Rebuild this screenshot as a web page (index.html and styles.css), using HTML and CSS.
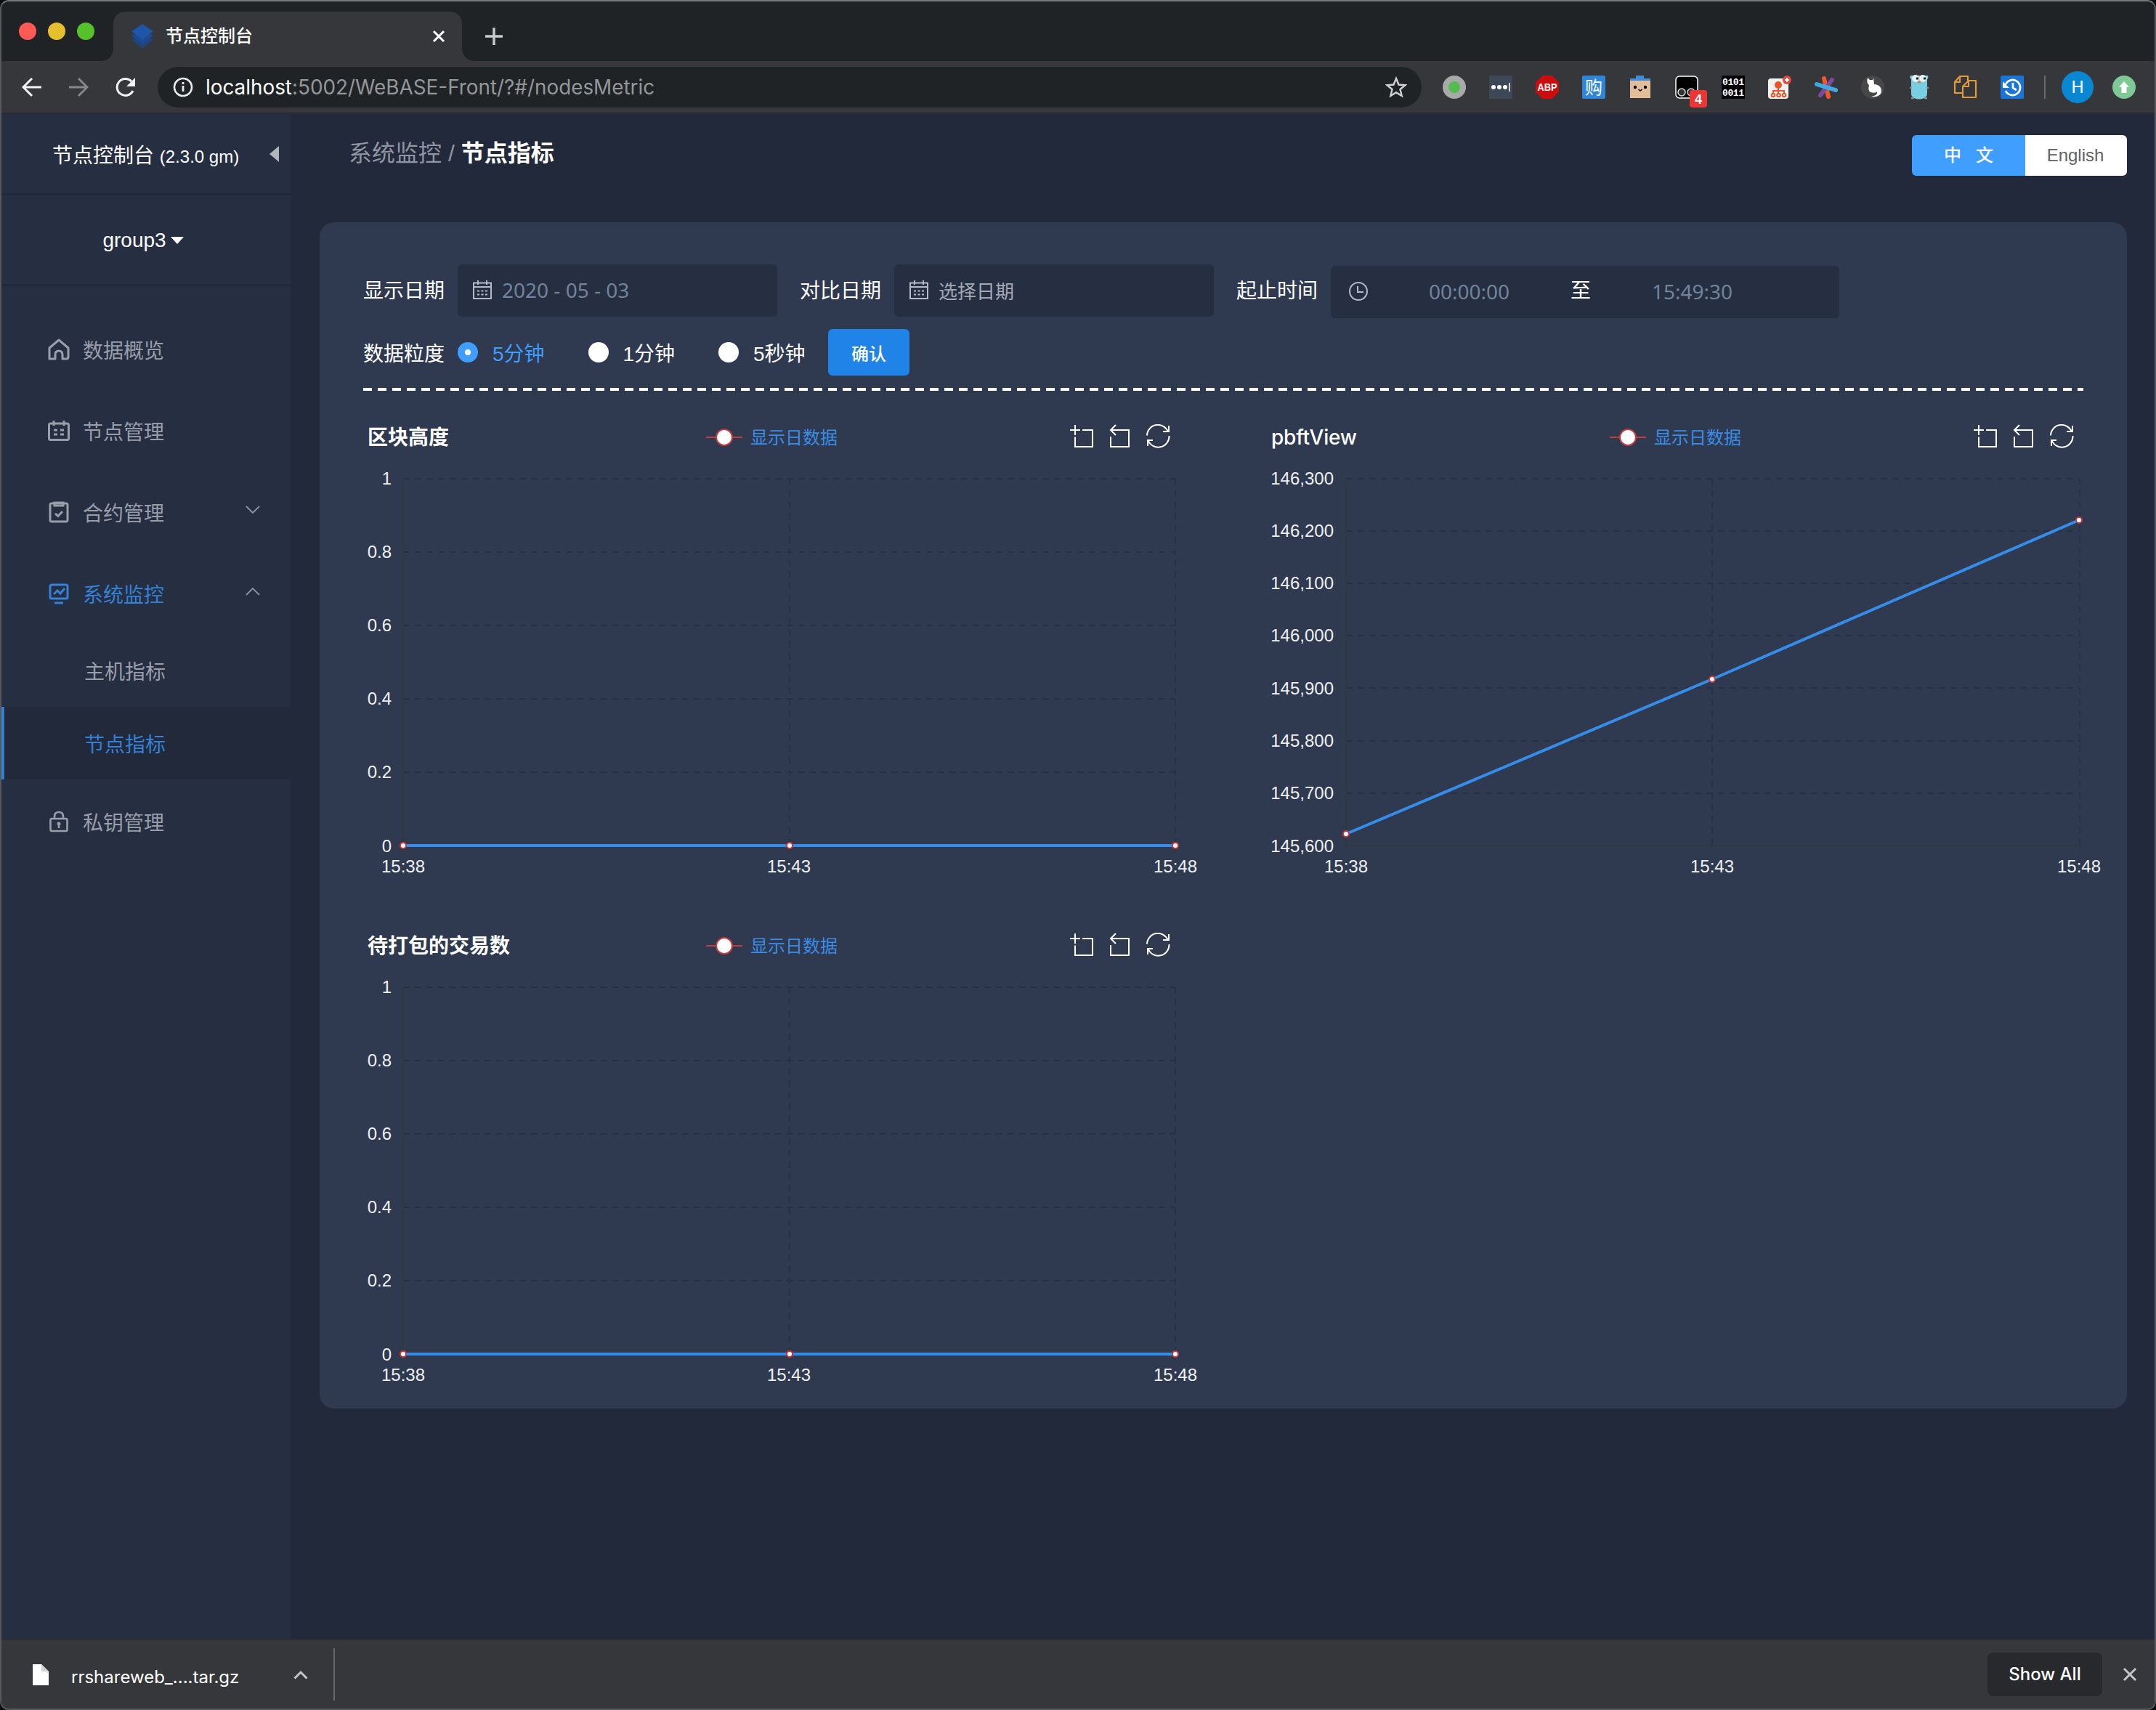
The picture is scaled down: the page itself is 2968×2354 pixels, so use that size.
FILE: index.html
```html
<!DOCTYPE html>
<html lang="zh-CN">
<head>
<meta charset="utf-8">
<title>节点控制台</title>
<link rel="stylesheet" href="styles.css">
</head>
<body>
<svg class="defs" width="0" height="0">
  <defs>
    <symbol id="calendar" viewBox="0 0 26 28"><g fill="none" stroke="#b4bac6" stroke-width="2"><path d="M1 4.500h24v21.500H1zM1 10h24M7 1v6M19 1v6"/><path d="M6 15.500h14M6 20.500h14" stroke-dasharray="3 2.500"/></g></symbol>
    <symbol id="toolbox" viewBox="0 0 140 34"><g fill="none" stroke="#fff" stroke-width="2"><path d="M0 8h14M7 1v14M17 8h14v23H7V17.500"/><path d="M63 1l-7 7 7 7M56 8h25v23H56V17"/><path d="M106 15.500a15 15 0 0 1 29-5M136 2v8h-8M136.500 16a15 15 0 0 1-29 6M107 30v-8h7"/></g></symbol>
    <symbol id="legend" viewBox="0 0 52 28"><path d="M1 14h50" stroke="#c23b3f" stroke-width="2"/><circle cx="26" cy="14" r="11" fill="#fff" stroke="#c23b3f" stroke-width="2"/></symbol>
    <symbol id="dot" viewBox="0 0 10 10"><circle cx="5" cy="5" r="4" fill="#fff" stroke="#c8373c" stroke-width="2"/></symbol>
  </defs>
</svg>
<div class="window">
  <header class="tabstrip">
    <div class="lights"><i class="red"></i><i class="yellow"></i><i class="green"></i></div>
    <div class="tab">
      <svg class="favicon" width="32" height="34" viewBox="0 0 32 34"><path d="M16 13l15 9-15 12L1 22z" fill="#204378"/><path d="M16 7l15 9-15 12L1 16z" fill="#1d4a90"/><path d="M16 0l15 10-15 12L1 10z" fill="#1d55a8"/></svg>
      <span class="tab-title">节点控制台</span>
      <svg width="18" height="18" viewBox="0 0 18 18"><path d="M2 2l14 14M16 2L2 16" stroke="#fff" stroke-width="3"/></svg>
    </div>
    <svg class="newtab" width="26" height="26" viewBox="0 0 26 26"><path d="M13 1v24M1 13h24" stroke="#c8cacc" stroke-width="3.500"/></svg>
  </header>
  <div class="toolbar">
    <svg class="nav" width="28" height="28" viewBox="0 0 28 28"><path d="M27 14H3M14 2L2 14l12 12" fill="none" stroke="#f1f3f4" stroke-width="3"/></svg>
    <svg class="nav" width="28" height="28" viewBox="0 0 28 28"><path d="M1 14h24M14 2l12 12-12 12" fill="none" stroke="#85878a" stroke-width="3"/></svg>
    <svg class="nav" width="30" height="28" viewBox="0 0 30 28"><path d="M25 19A11.500 11.500 0 1 1 23 6" fill="none" stroke="#f1f3f4" stroke-width="3"/><path d="M28 1v12H16z" fill="#f1f3f4"/></svg>
    <div class="omnibox">
      <svg width="28" height="28" viewBox="0 0 28 28"><circle cx="14" cy="14" r="12" fill="none" stroke="#e8eaed" stroke-width="2.600"/><path d="M14 12v8M14 7v3" stroke="#e8eaed" stroke-width="2.800"/></svg>
      <span class="url"><b>localhost</b>:5002/WeBASE-Front/?#/nodesMetric</span>
      <svg width="30" height="30" viewBox="0 0 30 30"><path d="M15 3l3.500 8.500 9 .7-7 5.800 2.200 9L15 22.200 7.300 27l2.200-9-7-5.800 9-.7z" fill="none" stroke="#d0d2d5" stroke-width="2.400"/></svg>
    </div>
    <div class="extensions">
      <svg viewBox="0 0 32 32"><circle cx="16" cy="16" r="16" fill="#a9a9a9"/><circle cx="16" cy="16" r="8" fill="#53bd52"/></svg>
      <svg viewBox="0 0 32 32"><path d="M0 0h32v32H0z" fill="#3c4855"/><g fill="#fff"><circle cx="6" cy="16" r="3"/><circle cx="14" cy="16" r="3"/><circle cx="22" cy="16" r="3"/><path d="M27 10h1.500v12H27z"/></g></svg>
      <svg viewBox="0 0 32 32"><path d="M9.500 0h13L32 9.500v13L22.500 32h-13L0 22.500v-13z" fill="#cb0d0d"/><text x="16" y="21" class="abp" textLength="27" lengthAdjust="spacingAndGlyphs">ABP</text></svg>
      <svg viewBox="0 0 32 32"><rect width="32" height="32" rx="2" fill="#2f86d8"/><text x="16" y="25" class="buy">购</text></svg>
      <svg viewBox="0 0 32 32"><path d="M10 0h11v6H10z" fill="#3d8edb"/><path d="M2 4h28v27H2z" fill="#e3bd9a"/><path d="M2 4h28v3H2z" fill="#3d8edb"/><circle cx="9" cy="16" r="2.200"/><circle cx="23" cy="16" r="2.200"/><path d="M13.500 19l2.500 2 2.500-2" fill="none" stroke="#000" stroke-width="1.600"/></svg>
      <svg viewBox="0 0 32 32"><rect x="1" y="1" width="30" height="30" rx="5" fill="#000" stroke="#fff" stroke-width="1.500"/><g fill="#333" stroke="#ddd" stroke-width="1.500"><circle cx="9" cy="23" r="5"/><circle cx="22" cy="23" r="5"/></g><rect x="20" y="20" width="24" height="24" rx="4" fill="#ea3634"/><text x="32" y="38.500" class="badge">4</text></svg>
      <svg viewBox="0 0 32 32"><path d="M0 0h32v32H0z"/><text x="1" y="13" class="bits" textLength="30">0101</text><text x="1" y="28" class="bits" textLength="30">0011</text></svg>
      <svg viewBox="0 0 32 32"><rect y="4" width="28" height="28" rx="4" fill="#f4f2f1"/><g fill="none" stroke="#e7552d" stroke-width="2"><path d="M14 16v8M7 25v-4h15v4"/><circle cx="7" cy="27" r="2.300"/><circle cx="14.500" cy="27" r="2.300"/><circle cx="22" cy="27" r="2.300"/></g><circle cx="14" cy="13" r="5" fill="#e7552d"/><circle cx="26" cy="6" r="6" fill="#e64a3b"/><path d="M26 3v6M23 6h6" stroke="#fff" stroke-width="2"/></svg>
      <svg viewBox="0 0 32 32"><g stroke-width="6" stroke-linecap="round"><path d="M13 4l6 25" stroke="#f0592b"/><path d="M24 6L8 27" stroke="#7d4b9b"/><path d="M3 12l26 8" stroke="#3fa9e0"/></g></svg>
      <svg viewBox="0 0 32 32"><circle cx="16" cy="16" r="16" fill="#474747"/><path d="M9 3l3 3h4l1-3 1 9c6 0 10 4 10 9 0 6-6 9-14 8 5-1 9-3 8-7-1 2-5 2-9 1-3-2-3-5-2-10-3-2-3-6-2-10z" fill="#fff"/></svg>
      <svg viewBox="0 0 32 32"><path d="M4 0h24c1 3 0 4-1 5v20c0 10-22 10-22 0V5C3 4 3 2 4 0z" fill="#78cfe1"/><circle cx="11" cy="4" r="5" fill="#eee"/><circle cx="21" cy="4" r="5" fill="#eee"/><path d="M12 4h3M22 4h3" stroke="#222" stroke-width="3"/><path d="M14 9h4" stroke="#b98b6c" stroke-width="3"/><path d="M3 17h3M26 17h3M5 31h4M23 31h4" stroke="#8d9295" stroke-width="2.500"/></svg>
      <svg viewBox="0 0 32 32"><g fill="none" stroke="#e09a3c" stroke-width="2.200" stroke-linejoin="round"><path d="M11 24H1V9l7-8h11v7M8 1v8H1"/><path d="M12 15l8-8h10v23H12zM20 7v8h-8"/></g></svg>
      <svg viewBox="0 0 32 32"><rect width="32" height="32" rx="2" fill="#1976d8"/><path d="M7 12a10.500 10.500 0 1 1 0 9M17 10v7l5 3" fill="none" stroke="#fff" stroke-width="2.800"/><path d="M3 8v9h9z" fill="#fff"/></svg>
    </div>
    <i class="bar-rule"></i>
    <span class="avatar">H</span>
    <svg width="32" height="32" viewBox="0 0 32 32"><circle cx="16" cy="16" r="16" fill="#7ec995"/><path d="M16 8l7 8h-3.500v8h-7v-8H9z" fill="#fff"/></svg>
  </div>

  <div class="app">
    <aside class="sidebar">
      <div class="brand"><span>节点控制台 <small>(2.3.0 gm)</small></span><i class="collapse"></i></div>
      <div class="group"><span>group3</span><i class="caret"></i></div>
      <nav class="menu">
        <a class="item"><svg width="30" height="30" viewBox="0 0 30 30"><path d="M2 27V13L15 2l13 11v12q0 3-3 3h-5v-6q0-5-5-5t-5 5v6H2z" fill="none" stroke="currentColor" stroke-width="3" stroke-linejoin="round"/></svg><span>数据概览</span></a>
        <a class="item"><svg width="30" height="30" viewBox="0 0 30 30"><g fill="none" stroke="currentColor" stroke-width="3"><rect x="1.500" y="5" width="27" height="22.500" rx="2"/><path d="M8 1v7M22 1v7M8 14h5M17 14h5M8 20h5M17 20h5"/></g></svg><span>节点管理</span></a>
        <a class="item"><svg width="30" height="30" viewBox="0 0 30 30"><g fill="none" stroke="currentColor" stroke-width="3"><rect x="3" y="3" width="24" height="25" rx="2"/><path d="M9 2v4h12V2zM10 17l4 3.500 6-6.500"/></g></svg><span>合约管理</span><svg class="chev" width="20" height="12" viewBox="0 0 20 12"><path d="M1 1l9 9 9-9" fill="none" stroke="#8d93a0" stroke-width="1.800"/></svg></a>
        <a class="item on"><svg width="30" height="30" viewBox="0 0 30 30"><g fill="none" stroke="currentColor" stroke-width="3"><rect x="3" y="3" width="24" height="19" rx="2"/><path d="M9 28h12M8 16l5-5 4 4 6-7"/></g></svg><span>系统监控</span><svg class="chev" width="20" height="12" viewBox="0 0 20 12"><path d="M1 11l9-9 9 9" fill="none" stroke="#8d93a0" stroke-width="1.800"/></svg></a>
        <a class="sub">主机指标</a>
        <a class="sub active">节点指标</a>
        <a class="item"><svg width="30" height="30" viewBox="0 0 30 30"><g fill="none" stroke="currentColor" stroke-width="2.600"><rect x="3.500" y="11" width="23" height="17" rx="2"/><path d="M9 11V8q0-6 6-6t6 6v3M15 17v7"/></g><circle cx="15" cy="18" r="2.500" fill="currentColor"/></svg><span>私钥管理</span></a>
      </nav>
    </aside>

    <main class="main">
      <div class="topbar">
        <h1 class="crumbs">系统监控 <i>/</i> <b>节点指标</b></h1>
        <div class="lang"><span class="zh">中<i></i>文</span><span class="en">English</span></div>
      </div>
      <section class="panel">
        <div class="filters">
          <label>显示日期</label>
          <div class="field date"><svg width="26" height="28"><use href="#calendar"/></svg><span class="value">2020 - 05 - 03</span></div>
          <label>对比日期</label>
          <div class="field date"><svg width="26" height="28"><use href="#calendar"/></svg><span class="hint">选择日期</span></div>
          <label>起止时间</label>
          <div class="field time"><svg width="28" height="28" viewBox="0 0 28 28"><g fill="none" stroke="#b4bac6" stroke-width="2"><circle cx="14" cy="14" r="12"/><path d="M13 7v8h8"/></g></svg><span class="value start">00:00:00</span><span class="to">至</span><span class="value end">15:49:30</span></div>
        </div>
        <div class="granularity">
          <label>数据粒度</label>
          <span class="radio checked"><i></i>5分钟</span>
          <span class="radio"><i></i>1分钟</span>
          <span class="radio"><i></i>5秒钟</span>
          <button class="confirm">确认</button>
        </div>
        <div class="divider"></div>
        <div class="charts">
          <svg class="chart" viewBox="0 0 1150 650">
            <text class="title" x="6" y="42">区块高度</text>
            <use href="#legend" x="471" y="18" width="52" height="28"/><text class="legend" x="533" y="41">显示日数据</text>
            <use href="#toolbox" x="973" y="14" width="140" height="34"/>
            <path class="grid" d="M55 89H1118M55 190H1118M55 291H1118M55 392H1118M55 493H1118M587 89V594M1118 89V594"/>
            <path class="axis" d="M55 89V604M587 594v10M1118 594v10M55 594H1118"/>
            <g class="ylab"><text x="39" y="97">1</text><text x="39" y="198">0.8</text><text x="39" y="299">0.6</text><text x="39" y="400">0.4</text><text x="39" y="501">0.2</text><text x="39" y="603">0</text></g>
            <g class="xlab"><text x="55" y="631">15:38</text><text x="586" y="631">15:43</text><text x="1118" y="631">15:48</text></g>
            <path class="line" d="M55 594H1118"/>
            <use href="#dot" x="50" y="589" width="10" height="10"/><use href="#dot" x="582" y="589" width="10" height="10"/><use href="#dot" x="1113" y="589" width="10" height="10"/>
          </svg>
          <svg class="chart" viewBox="0 0 1150 650">
            <text class="title latin" x="6" y="42" textLength="118">pbftView</text>
            <use href="#legend" x="471" y="18" width="52" height="28"/><text class="legend" x="533" y="41">显示日数据</text>
            <use href="#toolbox" x="973" y="14" width="140" height="34"/>
            <path class="grid" d="M109 89H1119M109 161H1119M109 233H1119M109 305H1119M109 377H1119M109 450H1119M109 522H1119M613 89V594M1119 89V594"/>
            <path class="axis" d="M109 89V604M613 594v10M1119 594v10M109 594H1119"/>
            <g class="ylab"><text x="92" y="97">146,300</text><text x="92" y="169">146,200</text><text x="92" y="241">146,100</text><text x="92" y="313">146,000</text><text x="92" y="386">145,900</text><text x="92" y="458">145,800</text><text x="92" y="530">145,700</text><text x="92" y="603">145,600</text></g>
            <g class="xlab"><text x="109" y="631">15:38</text><text x="613" y="631">15:43</text><text x="1118" y="631">15:48</text></g>
            <path class="line" d="M109 578L613 365L1118 146"/>
            <use href="#dot" x="104" y="573" width="10" height="10"/><use href="#dot" x="608" y="360" width="10" height="10"/><use href="#dot" x="1113" y="141" width="10" height="10"/>
          </svg>
          <svg class="chart" viewBox="0 0 1150 650">
            <text class="title" x="6" y="42">待打包的交易数</text>
            <use href="#legend" x="471" y="18" width="52" height="28"/><text class="legend" x="533" y="41">显示日数据</text>
            <use href="#toolbox" x="973" y="14" width="140" height="34"/>
            <path class="grid" d="M55 89H1118M55 190H1118M55 291H1118M55 392H1118M55 493H1118M587 89V594M1118 89V594"/>
            <path class="axis" d="M55 89V604M587 594v10M1118 594v10M55 594H1118"/>
            <g class="ylab"><text x="39" y="97">1</text><text x="39" y="198">0.8</text><text x="39" y="299">0.6</text><text x="39" y="400">0.4</text><text x="39" y="501">0.2</text><text x="39" y="603">0</text></g>
            <g class="xlab"><text x="55" y="631">15:38</text><text x="586" y="631">15:43</text><text x="1118" y="631">15:48</text></g>
            <path class="line" d="M55 594H1118"/>
            <use href="#dot" x="50" y="589" width="10" height="10"/><use href="#dot" x="582" y="589" width="10" height="10"/><use href="#dot" x="1113" y="589" width="10" height="10"/>
          </svg>
        </div>
      </section>
    </main>
  </div>

  <footer class="downloads">
    <svg width="22" height="29" viewBox="0 0 22 29"><path d="M0 0h12l10 10v19H0z" fill="#fff"/><path d="M12 0v10h10z" fill="#cfd1d3"/></svg>
    <span class="file">rrshareweb_....tar.gz</span>
    <svg class="up" width="20" height="13" viewBox="0 0 20 13"><path d="M1.500 11.500L10 3l8.500 8.500" fill="none" stroke="#c3c5c8" stroke-width="3"/></svg>
    <i class="foot-rule"></i>
    <span class="showall">Show All</span>
    <svg width="20" height="20" viewBox="0 0 20 20"><path d="M2 2l16 16M18 2L2 18" stroke="#c3c5c8" stroke-width="3"/></svg>
  </footer>
</div>
</body>
</html>
```
FILE: styles.css
```css
* { box-sizing: border-box; }
body { margin: 0; background: #0b0c0e; font-family: "Liberation Sans", "Noto Sans CJK SC", sans-serif; color: #fff; }
i { font-style: normal; }
svg { display: block; flex: none; }
.defs { position: absolute; }
.window { width: 2968px; height: 2354px; border: 2px solid #56595d; border-top-color: #77797c; border-radius: 12px; overflow: hidden; display: flex; flex-direction: column; background: #21293b; }

.tabstrip { height: 82px; flex: none; background: #202326; display: flex; align-items: flex-start; padding-left: 24px; }
.lights { display: flex; gap: 16px; margin-top: 29px; width: 130px; }
.lights i { width: 24px; height: 24px; border-radius: 50%; }
.red { background: #ff5b54; }
.yellow { background: #e6bf2e; }
.green { background: #55c22c; }
.tab { position: relative; width: 480px; height: 68px; margin-top: 14px; padding: 0 23px 0 24px; display: flex; align-items: center; background: #35373a; border-radius: 16px 16px 0 0; }
.tab::before, .tab::after { content: ""; position: absolute; bottom: 0; width: 16px; height: 16px; }
.tab::before { left: -16px; background: radial-gradient(circle at 0 0, #202326 15.500px, #35373a 16px); }
.tab::after { right: -16px; background: radial-gradient(circle at 100% 0, #202326 15.500px, #35373a 16px); }
.tab-title { flex: 1; margin-left: 16px; font-size: 24px; line-height: 34px; font-weight: 500; }
.newtab { margin: 35px 0 0 31px; }

.toolbar { height: 73px; flex: none; background: #35373a; border-bottom: 2px solid #2b2c2f; display: flex; align-items: center; padding-left: 28px; }
.nav { margin-right: 36px; }
.omnibox { width: 1740px; height: 56px; margin-left: -7px; border-radius: 28px; background: #202326; display: flex; align-items: center; padding: 0 20px 0 21px; }
.url { flex: 1; margin-left: 17px; padding-top: 1px; font-family: Inter, sans-serif; font-size: 27.850px; color: #94979a; }
.url b { font-weight: 400; color: #fff; }
.extensions { display: flex; gap: 32px; margin-left: 29px; }
.extensions svg { width: 32px; height: 32px; overflow: visible; }
.abp { font: bold 14px "Liberation Sans", sans-serif; fill: #fff; text-anchor: middle; }
.buy { font: 24px "Noto Sans CJK SC", sans-serif; fill: #fff; text-anchor: middle; }
.badge { font: bold 18px "Liberation Sans", sans-serif; fill: #fff; text-anchor: middle; }
.bits { font: bold 13px "Liberation Mono", monospace; fill: #fff; }
.bar-rule { width: 2px; height: 32px; background: #66686b; margin: 0 22px 0 28px; }
.avatar { width: 44px; height: 44px; border-radius: 50%; background: #0a87d2; font: 24px/44px Roboto, sans-serif; text-align: center; margin-right: 26px; }

.app { flex: 1; min-height: 0; display: flex; }
.sidebar { width: 398px; flex: none; background: #262e41; }
.brand { height: 112px; border-bottom: 3px solid #20283a; display: flex; align-items: center; padding: 0 16px 0 70px; font-size: 28px; }
.brand span { flex: 1; white-space: nowrap; }
.brand small { font-size: 24px; }
.collapse { border: solid transparent; border-width: 11px 13px 11px 0; border-right-color: #b2b5bd; }
.group { height: 125px; border-bottom: 3px solid #20283a; display: flex; align-items: center; justify-content: center; gap: 6px; font-size: 28px; padding: 1px 8px 0 0; }
.caret { border: solid transparent; border-width: 10px 9px 0; border-top-color: #fff; }
.menu { padding-top: 31px; color: #999eab; font-size: 28px; }
.item { height: 112px; display: flex; align-items: center; padding: 0 42px 0 64px; }
.item span { flex: 1; margin-left: 18px; }
.item > svg:first-child { margin-top: -1px; }
.chev { margin-top: -7px; }
.on, .active { color: #3481d6; }
.sub { display: flex; align-items: center; height: 100px; padding-left: 114px; }
.active { background: #21293b; box-shadow: inset 4px 0 #3180d4; margin-bottom: 2px; }

.main { flex: 1; padding: 0 38px 0 40px; background: #21293b; }
.topbar { height: 149px; display: flex; justify-content: space-between; align-items: flex-start; }
.crumbs { margin: 30px 0 0 40px; font-size: 32px; line-height: 48px; font-weight: 400; color: #8f95a1; }
.crumbs b { color: #fff; }
.lang { display: flex; margin-top: 29px; height: 56px; border-radius: 6px; overflow: hidden; font-size: 24px; line-height: 56px; }
.zh { width: 156px; background: #409eff; display: flex; justify-content: center; font-weight: 500; }
.zh i { width: 20px; }
.en { width: 140px; padding-right: 2px; background: #fff; color: #606266; text-align: center; }

.panel { height: 1633px; border-radius: 20px; background: #2f3a51; padding: 58px 60px 0; }
.filters { display: flex; height: 74px; font-size: 28px; }
.filters label { width: 130px; line-height: 73px; }
.field { height: 72px; border-radius: 6px; background: #262e41; display: flex; align-items: center; }
.date { width: 440px; padding: 0 0 2px 21px; margin-right: 31px; }
.date svg { margin-right: 14px; }
.value { font-family: "Noto Sans", sans-serif; color: #71849b; }
.hint { color: #a2a9b5; font-size: 26px; }
.time { width: 700px; margin: 2px 0 0 0; padding: 0 0 2px 24px; }
.start { margin-left: 83px; width: 111px; }
.to { width: 28px; margin: -6px 84px 0; }
.granularity { display: flex; align-items: center; height: 64px; margin-top: 15px; font-size: 28px; }
.granularity label { width: 130px; }
.radio { display: flex; align-items: center; width: 179.500px; }
.radio i { width: 28px; height: 28px; border-radius: 50%; background: #fff; margin-right: 20px; }
.checked { color: #409eff; }
.checked i { border: 10px solid #409eff; }
.confirm { width: 112px; height: 64px; border: 0; border-radius: 6px; background: #1f83e7; color: #fff; font: 500 24px "Liberation Sans", "Noto Sans CJK SC", sans-serif; padding: 0; margin-left: -28.500px; }
.divider { height: 4px; margin-top: 17px; background: repeating-linear-gradient(90deg, #fff 0 12px, transparent 12px 20px); }
.charts { display: grid; grid-template-columns: 1150px 1150px; column-gap: 94px; row-gap: 50px; margin: 32px -60px 0 0; }
.chart { width: 1150px; height: 650px; overflow: visible; }
.title { font-size: 28px; font-weight: 700; fill: #fff; }
.latin { font-family: Inter, sans-serif; font-weight: 500; }
.legend { font-size: 24px; fill: #3a8de6; }
.grid { fill: none; stroke: #263046; stroke-width: 2; stroke-dasharray: 9 7; }
.axis { fill: none; stroke: #333740; stroke-width: 2; }
.line { fill: none; stroke: #358de9; stroke-width: 4; }
.ylab, .xlab { font-size: 24px; fill: #eef0f3; }
.ylab { text-anchor: end; }
.xlab { text-anchor: middle; }

.downloads { height: 96px; flex: none; background: #35373a; border-top: 2px solid #2c2e31; display: flex; align-items: center; padding: 0 24px 0 43px; font-family: Inter, sans-serif; font-size: 24px; }
.file { margin-left: 31px; width: 306px; padding-top: 7px; }
.foot-rule { width: 2px; height: 72px; background: #66686b; margin-left: 35px; flex: none; }
.showall { width: 158px; height: 60px; margin: 0 28px 0 auto; border-radius: 8px; background: #27292c; line-height: 60px; text-align: center; font-weight: 500; }
```
